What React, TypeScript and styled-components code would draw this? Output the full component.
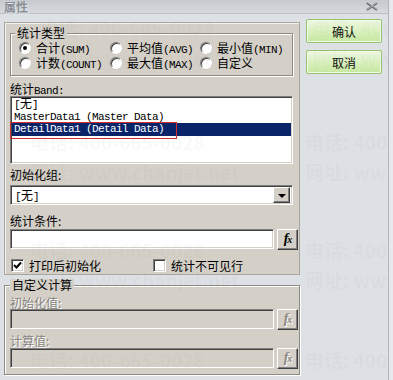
import styled, { createGlobalStyle } from "styled-components";

const GlobalStyle = createGlobalStyle`
  html, body {
    margin: 0;
    padding: 0;
    background: #e6e8ec;
  }
  body {
    font-family: "Liberation Mono", "Noto Sans CJK SC", monospace;
    font-size: 12px;
    color: #000;
  }
`;

const FACE = "#d4d0c8";

const Window = styled.div`
  position: relative;
  width: 389px;
  height: 380px;
  box-sizing: border-box;
  background: #dde0e4;
  border-right: 1px solid #b2b6bc;
  overflow: hidden;
`;

const TitleBar = styled.div`
  height: 14px;
  box-sizing: border-box;
  display: flex;
  align-items: center;
  justify-content: space-between;
  padding: 0 10px 0 4px;
  background: linear-gradient(#c6cace, #d6d9dd);
  border-bottom: 1px solid #bcc0c5;
`;

const Title = styled.span`
  font-family: "Noto Sans CJK SC", sans-serif;
  font-size: 12px;
  font-weight: 700;
  line-height: 13px;
  color: #8c9096;
  text-shadow: 1px 1px 0 #e4e6ea;
`;

const Body = styled.div`
  display: flex;
  align-items: flex-start;
  gap: 6px;
  padding: 8px 0 0 4px;
`;

const LeftCol = styled.div`
  width: 296px;
  flex: none;
  display: flex;
  flex-direction: column;
`;

const RightCol = styled.div`
  display: flex;
  flex-direction: column;
  gap: 7px;
  margin-top: -3px;
`;

const OkButton = styled.button`
  width: 76px;
  height: 24px;
  padding: 0;
  font-family: "Noto Sans CJK SC", sans-serif;
  font-size: 12px;
  color: #111;
  background: linear-gradient(#eef8e2, #d6efb8 60%, #c6e6a0);
  border: 1px solid #93c46a;
  border-radius: 2px;
  box-shadow: inset 0 0 0 1px #f4fbec;
`;

const Panel = styled.div`
  height: 253px;
  box-sizing: border-box;
  background: ${FACE};
  border: 1px solid #aaa69e;
  box-shadow: inset 1px 1px 0 #f4f2ee;
  padding: 0 6px 0 5px;
  display: flex;
  flex-direction: column;
  flex: none;
`;

const GroupBox = styled.div<{ $mt: number; $pad: string; $bg?: string }>`
  margin-top: ${(p) => p.$mt}px;
  padding: ${(p) => p.$pad};
  border: 1px solid #8e8b85;
  box-shadow: 1px 1px 0 #fff, inset 1px 1px 0 #fff;
  background: ${(p) => p.$bg ?? "transparent"};
  flex: none;
`;

const Legend = styled.div<{ $ml: number; $mb: number }>`
  width: fit-content;
  height: 12px;
  margin: -7px 0 ${(p) => p.$mb}px ${(p) => p.$ml}px;
  padding: 0 2px;
  font-family: "Noto Sans CJK SC", sans-serif;
  font-size: 12px;
  line-height: 12px;
  background: ${FACE};
`;

const RadioGrid = styled.div`
  display: grid;
  grid-template-columns: 91px 90px auto;
  grid-auto-rows: 15px;
`;

const RadioItem = styled.label`
  display: flex;
  align-items: center;
  gap: 5px;
  font-family: "Noto Sans CJK SC", sans-serif;
  font-size: 12px;
  white-space: nowrap;
`;

const RadioDot = styled.span<{ $on?: boolean }>`
  width: 12px;
  height: 12px;
  box-sizing: border-box;
  border-radius: 50%;
  background: #fff;
  border: 1px solid;
  border-color: #808080 #fff #fff #808080;
  box-shadow: inset 1px 1px 0 #404040, 0 0 0 0.5px #c8c4bc;
  display: flex;
  align-items: center;
  justify-content: center;
  flex: none;

  &::after {
    content: "";
    width: 4px;
    height: 4px;
    border-radius: 50%;
    background: ${(p) => (p.$on ? "#000" : "transparent")};
  }
`;

/* half-width latin, like the dialog's bitmap font: 6px per character */
const Lat = styled.span`
  font-family: "Liberation Mono", monospace;
  font-size: 11px;
  letter-spacing: -0.6px;
`;

const FieldLabel = styled.div<{ $mt: number; $disabled?: boolean }>`
  margin-top: ${(p) => p.$mt}px;
  line-height: 14px;
  height: 14px;
  flex: none;
  font-family: "Noto Sans CJK SC", sans-serif;
  font-size: 12px;
  color: ${(p) => (p.$disabled ? "#86837e" : "#000")};
  text-shadow: ${(p) => (p.$disabled ? "1px 1px 0 #fff" : "none")};
`;

const Sunken = styled.div<{ $disabled?: boolean }>`
  box-sizing: border-box;
  flex: none;
  background: ${(p) => (p.$disabled ? FACE : "#fff")};
  border: 1px solid;
  border-color: #808080 #fff #fff #808080;
  box-shadow: inset 1px 1px 0 #404040, inset -1px -1px 0 ${FACE};
`;

const ListBox = styled(Sunken)`
  height: 68px;
  padding: 2px 1px;
`;

const ListRow = styled.div<{ $selected?: boolean }>`
  position: relative;
  height: 12px;
  line-height: 12px;
  padding-left: 2px;
  background: ${(p) => (p.$selected ? "#0a246a" : "transparent")};
  color: ${(p) => (p.$selected ? "#fff" : "#000")};
  white-space: pre;

  &:last-child {
    height: 13px;
  }
`;

const Mark = styled.span`
  position: absolute;
  left: -2px;
  top: -1px;
  width: 167px;
  height: 17px;
  box-sizing: border-box;
  border: 1px solid #d03030;
  pointer-events: none;
`;

const SelectBox = styled(Sunken)`
  margin-top: 3px;
  height: 20px;
  display: flex;
  align-items: center;
  justify-content: space-between;
  padding: 0 2px 0 4px;
`;

const Raised = styled.div<{ $w: number; $h: number }>`
  width: ${(p) => p.$w}px;
  height: ${(p) => p.$h}px;
  box-sizing: border-box;
  background: ${FACE};
  border: 1px solid;
  border-color: #fff #404040 #404040 #fff;
  box-shadow: inset -1px -1px 0 #808080;
  display: flex;
  align-items: center;
  justify-content: center;
  flex: none;
`;

const Arrow = styled.span`
  width: 0;
  height: 0;
  border-left: 4px solid transparent;
  border-right: 4px solid transparent;
  border-top: 4px solid #000;
  margin-top: 1px;
`;

const InputRow = styled.div<{ $mt: number }>`
  margin-top: ${(p) => p.$mt}px;
  display: flex;
  gap: 3px;
  align-items: flex-start;
  flex: none;
`;

const TextBox = styled(Sunken)`
  width: 264px;
  height: 20px;
`;

const Fx = styled.span<{ $disabled?: boolean }>`
  font-family: "Liberation Serif", serif;
  font-style: italic;
  font-weight: 700;
  font-size: 14px;
  line-height: 14px;
  color: ${(p) => (p.$disabled ? "#8a8780" : "#000")};
  text-shadow: ${(p) => (p.$disabled ? "1px 1px 0 #fff" : "none")};
  letter-spacing: -1px;

  small {
    font-size: 10px;
  }
`;

const CheckRow = styled.div`
  margin-top: 7px;
  display: grid;
  grid-template-columns: 142px auto;
  height: 14px;
  align-items: center;
  padding-left: 1px;
  flex: none;
`;

const CheckItem = styled.label`
  display: flex;
  align-items: center;
  gap: 5px;
  font-family: "Noto Sans CJK SC", sans-serif;
  font-size: 12px;
  white-space: nowrap;
`;

const CheckBox = styled(Sunken)`
  width: 13px;
  height: 13px;
  display: flex;
  align-items: center;
  justify-content: center;
`;

const Watermark = styled.div`
  position: absolute;
  inset: 0;
  pointer-events: none;
`;

const WmText = styled.span`
  position: absolute;
  font-family: "Noto Sans CJK SC", "Open Sans", sans-serif;
  font-size: 19px;
  font-weight: 700;
  color: rgba(90, 90, 100, 0.045);
  white-space: nowrap;
`;

const CloseIcon = () => (
  <svg width="12" height="9" viewBox="0 0 12 9">
    <path d="M1 1 L11 8 M11 1 L1 8" stroke="#5c6066" strokeWidth="2" />
    <path d="M1.5 0.5 L11 7.5 M11 0.5 L1.5 7.5" stroke="#e8eaee" strokeWidth="0.6" />
  </svg>
);

const Tick = () => (
  <svg width="9" height="9" viewBox="0 0 9 9">
    <path d="M1 4 L3.5 6.5 L8 1.5" stroke="#000" strokeWidth="2" fill="none" />
  </svg>
);

const FxButton = ({ disabled }: { disabled?: boolean }) => (
  <Raised $w={21} $h={21}>
    <Fx $disabled={disabled}>
      f<small>x</small>
    </Fx>
  </Raised>
);

const marks = [
  { x: 40, y: 14, t: "电话: 400-665-0028" },
  { x: 312, y: 14, t: "电话: 400" },
  { x: 40, y: 44, t: "网址: www.chanjet.net" },
  { x: 312, y: 44, t: "网址: www" },
  { x: 30, y: 128, t: "电话: 400-665-0028" },
  { x: 305, y: 128, t: "电话: 400" },
  { x: 30, y: 158, t: "网址: www.chanjet.net" },
  { x: 305, y: 158, t: "网址: www" },
  { x: 30, y: 236, t: "电话: 400-665-0028" },
  { x: 305, y: 236, t: "电话: 400" },
  { x: 30, y: 266, t: "网址: www.chanjet.net" },
  { x: 305, y: 266, t: "网址: www" },
  { x: 30, y: 346, t: "电话: 400-665-0028" },
  { x: 305, y: 346, t: "电话: 400" },
];

export default function App() {
  return (
    <>
      <GlobalStyle />
      <Window>
        <TitleBar>
          <Title>属性</Title>
          <CloseIcon />
        </TitleBar>
        <Body>
          <LeftCol>
            <Panel>
              <GroupBox $mt={10} $pad="0 8px 5px">
                <Legend $ml={-4} $mb={1}>统计类型</Legend>
                <RadioGrid>
                  <RadioItem>
                    <RadioDot $on />
                    <span>合计<Lat>(SUM)</Lat></span>
                  </RadioItem>
                  <RadioItem>
                    <RadioDot />
                    <span>平均值<Lat>(AVG)</Lat></span>
                  </RadioItem>
                  <RadioItem>
                    <RadioDot />
                    <span>最小值<Lat>(MIN)</Lat></span>
                  </RadioItem>
                  <RadioItem>
                    <RadioDot />
                    <span>计数<Lat>(COUNT)</Lat></span>
                  </RadioItem>
                  <RadioItem>
                    <RadioDot />
                    <span>最大值<Lat>(MAX)</Lat></span>
                  </RadioItem>
                  <RadioItem>
                    <RadioDot />
                    <span>自定义</span>
                  </RadioItem>
                </RadioGrid>
              </GroupBox>

              <FieldLabel $mt={6}>
                统计<Lat>Band:</Lat>
              </FieldLabel>
              <ListBox>
                <ListRow>
                  <Lat>[</Lat>无<Lat>]</Lat>
                </ListRow>
                <ListRow>
                  <Lat>MasterData1 (Master Data)</Lat>
                </ListRow>
                <ListRow $selected>
                  <Lat>DetailData1 (Detail Data)</Lat>
                  <Mark />
                </ListRow>
              </ListBox>

              <FieldLabel $mt={4}>初始化组:</FieldLabel>
              <SelectBox>
                <span>
                  <Lat>[</Lat>无<Lat>]</Lat>
                </span>
                <Raised $w={17} $h={16}>
                  <Arrow />
                </Raised>
              </SelectBox>

              <FieldLabel $mt={9}>统计条件:</FieldLabel>
              <InputRow $mt={1}>
                <TextBox />
                <FxButton />
              </InputRow>

              <CheckRow>
                <CheckItem>
                  <CheckBox>
                    <Tick />
                  </CheckBox>
                  打印后初始化
                </CheckItem>
                <CheckItem>
                  <CheckBox />
                  统计不可见行
                </CheckItem>
              </CheckRow>
            </Panel>

            <GroupBox $mt={10} $pad="0 5px 5px" $bg={FACE}>
              <Legend $ml={0} $mb={5}>自定义计算</Legend>
              <FieldLabel $mt={0} $disabled>
                初始化值:
              </FieldLabel>
              <InputRow $mt={-1}>
                <TextBox $disabled />
                <FxButton disabled />
              </InputRow>
              <FieldLabel $mt={4} $disabled>
                计算值:
              </FieldLabel>
              <InputRow $mt={0}>
                <TextBox $disabled />
                <FxButton disabled />
              </InputRow>
            </GroupBox>
          </LeftCol>

          <RightCol>
            <OkButton type="button">确认</OkButton>
            <OkButton type="button">取消</OkButton>
          </RightCol>
        </Body>
        <Watermark>
          {marks.map((m, i) => (
            <WmText key={i} style={{ left: m.x, top: m.y }}>
              {m.t}
            </WmText>
          ))}
        </Watermark>
      </Window>
    </>
  );
}
